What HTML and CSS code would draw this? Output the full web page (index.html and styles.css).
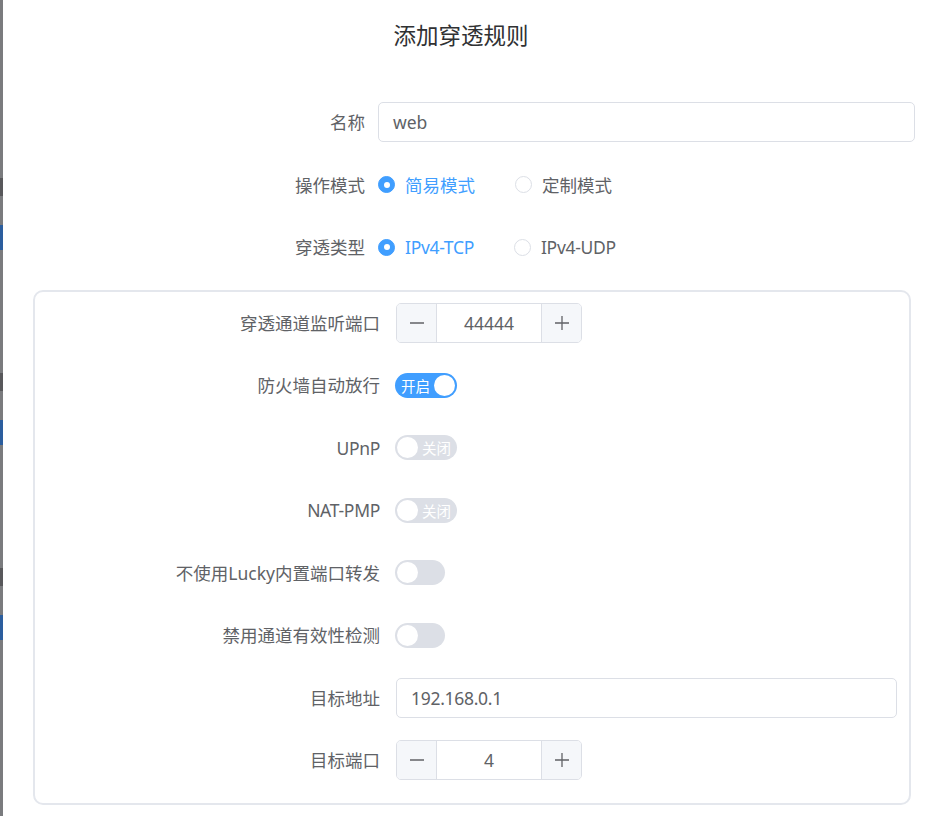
FILE: index.html
```html
<!DOCTYPE html>
<html lang="zh-CN">
<head>
<meta charset="utf-8">
<title>添加穿透规则</title>
<link rel="stylesheet" href="styles.css">
</head>
<body>
<div class="page">
  <div class="backdrop">
    <div class="frag-group"><span class="frag-text"></span><span class="frag-blue"></span></div>
    <div class="frag-group"><span class="frag-text"></span><span class="frag-blue"></span></div>
    <div class="frag-group"><span class="frag-text"></span><span class="frag-blue"></span></div>
  </div>
  <div class="dialog">
    <h1 class="title">添加穿透规则</h1>
    <div class="form">
      <div class="item top">
        <label class="label">名称</label>
        <div class="control"><div class="input">web</div></div>
      </div>
      <div class="item top">
        <label class="label">操作模式</label>
        <div class="control radios">
          <span class="radio checked"><span class="dot"></span><span class="rtext">简易模式</span></span>
          <span class="radio"><span class="dot"></span><span class="rtext">定制模式</span></span>
        </div>
      </div>
      <div class="item top">
        <label class="label">穿透类型</label>
        <div class="control radios">
          <span class="radio checked"><span class="dot"></span><span class="rtext latin">IPv4-TCP</span></span>
          <span class="radio"><span class="dot"></span><span class="rtext latin">IPv4-UDP</span></span>
        </div>
      </div>
      <div class="card">
        <div class="item inner">
          <label class="label">穿透通道监听端口</label>
          <div class="control">
            <div class="num">
              <span class="nbtn minus"><svg width="16" height="16" viewBox="0 0 16 16"><path d="M1 8h14" stroke="#606266" stroke-width="1.3" fill="none"/></svg></span>
              <span class="nval">44444</span>
              <span class="nbtn plus"><svg width="16" height="16" viewBox="0 0 16 16"><path d="M1 8h14M8 1v14" stroke="#606266" stroke-width="1.3" fill="none"/></svg></span>
            </div>
          </div>
        </div>
        <div class="item inner">
          <label class="label">防火墙自动放行</label>
          <div class="control"><span class="switch wide on"><span class="swtext">开启</span><span class="knob"></span></span></div>
        </div>
        <div class="item inner">
          <label class="label latin">UPnP</label>
          <div class="control"><span class="switch wide"><span class="knob"></span><span class="swtext">关闭</span></span></div>
        </div>
        <div class="item inner">
          <label class="label latin">NAT-PMP</label>
          <div class="control"><span class="switch wide"><span class="knob"></span><span class="swtext">关闭</span></span></div>
        </div>
        <div class="item inner">
          <label class="label">不使用Lucky内置端口转发</label>
          <div class="control"><span class="switch"><span class="knob"></span></span></div>
        </div>
        <div class="item inner">
          <label class="label">禁用通道有效性检测</label>
          <div class="control"><span class="switch"><span class="knob"></span></span></div>
        </div>
        <div class="item inner">
          <label class="label">目标地址</label>
          <div class="control"><div class="input latin">192.168.0.1</div></div>
        </div>
        <div class="item inner">
          <label class="label">目标端口</label>
          <div class="control">
            <div class="num">
              <span class="nbtn minus"><svg width="16" height="16" viewBox="0 0 16 16"><path d="M1 8h14" stroke="#606266" stroke-width="1.3" fill="none"/></svg></span>
              <span class="nval">4</span>
              <span class="nbtn plus"><svg width="16" height="16" viewBox="0 0 16 16"><path d="M1 8h14M8 1v14" stroke="#606266" stroke-width="1.3" fill="none"/></svg></span>
            </div>
          </div>
        </div>
      </div>
    </div>
  </div>
</div>
</body>
</html>
```
FILE: styles.css
```css
html, body {
  margin: 0;
  padding: 0;
  height: 100%;
  background: #ffffff;
}
body {
  font-family: "Noto Sans", "Noto Sans CJK SC", sans-serif;
  color: #606266;
  overflow: hidden;
}
.latin {
  letter-spacing: -0.3px;
}
.page {
  display: flex;
  width: 938px;
  height: 816px;
}
.backdrop {
  width: 3px;
  flex: none;
  background: #7a7b7e;
  display: flex;
  flex-direction: column;
  padding-top: 178px;
  box-sizing: border-box;
  gap: 123px;
}
.frag-group {
  display: flex;
  flex-direction: column;
  gap: 29px;
}
.frag-text {
  display: block;
  height: 18px;
  background: #4a4a4d;
  opacity: 0.7;
}
.frag-blue {
  display: block;
  height: 25px;
  background: #2c5e9e;
}
.dialog {
  flex: 1;
  background: #ffffff;
  padding: 20px 23px 0 30px;
  box-sizing: border-box;
}
.title {
  margin: 0;
  text-align: center;
  font-weight: 400;
  font-size: 22.5px;
  line-height: 32px;
  color: #303133;
  padding-right: 26px;
}
.form {
  margin-top: 50px;
}
.item {
  display: flex;
  align-items: center;
  height: 40px;
  margin-bottom: 22.5px;
}
.label {
  flex: none;
  text-align: right;
  box-sizing: border-box;
  font-size: 17.5px;
  line-height: 40px;
  color: #606266;
  white-space: nowrap;
}
.item.top .label {
  width: 345px;
  padding-right: 13px;
}
.item.inner .label {
  width: 361px;
  padding-right: 16px;
}
.control {
  flex: 1;
  display: flex;
  align-items: center;
  min-width: 0;
}
.input {
  flex: 1;
  height: 40px;
  box-sizing: border-box;
  border: 1px solid #dcdfe6;
  border-radius: 5px;
  padding: 0 14px;
  font-size: 17.5px;
  line-height: 38px;
  color: #606266;
}
.radios {
  gap: 40px;
}
.radio {
  display: inline-flex;
  align-items: center;
  gap: 10px;
  font-size: 17.5px;
  line-height: 24px;
  color: #606266;
}
.dot {
  width: 17px;
  height: 17px;
  box-sizing: border-box;
  border-radius: 50%;
  border: 1px solid #dcdfe6;
  background: #ffffff;
  display: inline-flex;
  align-items: center;
  justify-content: center;
}
.radio.checked .dot {
  background: #409eff;
  border-color: #409eff;
}
.radio.checked .dot::after {
  content: "";
  width: 6px;
  height: 6px;
  border-radius: 50%;
  background: #ffffff;
}
.radio.checked .rtext {
  color: #409eff;
}
.card {
  border: 2px solid #e4e7ed;
  border-radius: 10px;
  padding: 11px 12px 0 0;
  margin-right: 4px;
}
.num {
  display: flex;
  width: 186px;
  height: 40px;
  box-sizing: border-box;
  border: 1px solid #dcdfe6;
  border-radius: 5px;
  overflow: hidden;
}
.nbtn {
  width: 39px;
  flex: none;
  background: #f5f7fa;
  display: flex;
  align-items: center;
  justify-content: center;
}
.nbtn.minus {
  border-right: 1px solid #dcdfe6;
}
.nbtn.plus {
  border-left: 1px solid #dcdfe6;
}
.nval {
  flex: 1;
  text-align: center;
  font-size: 17.5px;
  line-height: 38px;
  color: #606266;
}
.switch {
  display: inline-flex;
  align-items: center;
  width: 50px;
  height: 25px;
  box-sizing: border-box;
  padding: 2px;
  border-radius: 12.5px;
  background: #dcdfe6;
  margin-left: -1px;
}
.switch.wide {
  width: 62px;
  justify-content: space-between;
}
.switch.on {
  background: #409eff;
}
.knob {
  width: 21px;
  height: 21px;
  border-radius: 50%;
  background: #ffffff;
  flex: none;
}
.swtext {
  font-size: 14.5px;
  line-height: 21px;
  color: #ffffff;
  padding: 0 4px 0 3px;
  font-family: "Noto Sans CJK SC", sans-serif;
}
.switch.on .swtext {
  padding: 0 2px 0 4px;
}
```
